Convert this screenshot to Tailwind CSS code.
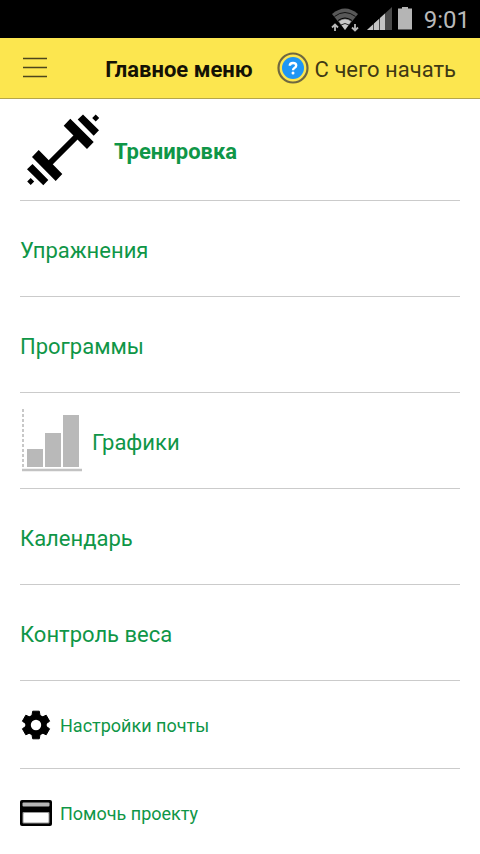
<!DOCTYPE html>
<html lang="ru">
<head>
    <meta charset="UTF-8">
    <meta name="viewport" content="width=device-width, initial-scale=1.0">
    <title>Главное меню</title>
    <script src="https://cdn.jsdelivr.net/npm/@tailwindcss/browser@4"></script>
</head>
<body class="bg-white font-[Roboto,sans-serif] overflow-x-hidden">

    <!-- Status bar -->
    <div class="flex h-[38px] items-center justify-end bg-black pr-2.5 text-[#b9b9b9]">
        <svg class="mr-2 h-7 w-7" viewBox="0 0 28 28" aria-hidden="true">
            <path d="M1 9Q14-2 27 9L14 25Z" fill="#585858"/>
            <path d="M3.500 11.500Q14 3.500 24.500 11.500" fill="none" stroke="#000" stroke-width="0.800"/>
            <path d="M8 16.500Q14 12 20 16.500L14 25Z" fill="#c8c8c8"/>
            <path d="M7 15.500Q14 10.500 21 15.500" fill="none" stroke="#000" stroke-width="1"/>
            <path d="M10 20Q14 17 18 20" fill="none" stroke="#000" stroke-width="0.800"/>
            <path d="M4 26V19M1 22.500L4 19.500L7 22.500M24 19V26M21 22.500L24 25.500L27 22.500" fill="none" stroke="#000" stroke-width="3.400"/>
            <path d="M4 26V19.500M1 22.500L4 19.500L7 22.500M24 19V25.500M21 22.500L24 25.500L27 22.500" fill="none" stroke="#b9b9b9" stroke-width="1.800"/>
        </svg>
        <svg class="mr-1.5 h-6 w-[25px]" viewBox="0 0 25 24" aria-hidden="true">
            <path d="M0 23L25 0V23Z" fill="#4a4a4a"/>
            <path d="M0 23L6 17.500V23ZM7 23V16.600L12 12V23ZM13 23V11L18 6.400V23Z" fill="#c4c4c4"/>
        </svg>
        <svg class="mr-3 h-6 w-3.5" viewBox="0 0 14 24" aria-hidden="true">
            <path d="M0 1.500H4V0H10V1.500H14V22.500H0Z" fill="#b5b5b5"/>
        </svg>
        <span class="pt-0.5 text-2xl">9:01</span>
    </div>

    <header class="flex h-[61px] items-center border-b border-[#b5a64a] bg-[#fce64f] pr-6 pl-[22px]">
        <button type="button" aria-label="Меню" class="h-6 w-[26px]">
            <svg class="h-6 w-[26px]" viewBox="0 0 26 24" aria-hidden="true">
                <path d="M1 2.500H25M1 11.500H25M1 20.500H25" stroke="#4d461c" stroke-width="1.400"/>
            </svg>
        </button>
        <h1 class="ml-auto pt-0.5 text-[22px] font-bold text-[#141205]">Главное меню</h1>
        <a href="#start" class="ml-6 flex items-center gap-1.5 text-[22px] text-[#3f3914]">
            <svg class="h-8 w-8" viewBox="0 0 32 32" aria-hidden="true">
                <circle cx="16" cy="16" r="14.500" fill="none" stroke="#6f6840" stroke-width="2.200"/>
                <circle cx="16" cy="16" r="11" fill="#1e96f5"/>
                <path d="M12.800 13.800Q12.800 11 16 11T19.200 13.500Q19.200 15 17.400 16Q16 16.800 16 18.300" fill="none" stroke="#fff" stroke-width="2.400"/>
                <circle cx="16" cy="21" r="1.500" fill="#fff"/>
            </svg>
            <span class="pt-0.5">С чего начать</span>
        </a>
    </header>

    <nav class="px-5 text-[22px] text-[#0f9647]">
        <a href="#training" class="flex h-[102px] items-center gap-3.5 border-b border-[#cbcbcb] font-bold">
            <svg class="h-20 w-20" viewBox="0 0 80 80" aria-hidden="true">
                <path d="M56 27L30 53" stroke="#000" stroke-width="6"/>
                <path d="M50.300 8.700L73.700 32L67 39L43.700 15.700ZM63 4.500L79 20.300L73.700 25.700L57.700 9.500ZM75.700 4.500L79.200 8L75.700 11.500L72.200 8Z"/>
                <path d="M18.700 40L42.300 64L35.700 71L12 47ZM12.500 54L28.300 70L23.300 75.300L7 59.300ZM10.700 68L14.200 71.500L10.700 75L7.200 71.500Z"/>
            </svg>
            <span class="pt-1">Тренировка</span>
        </a>
        <a href="#exercises" class="flex h-24 items-center border-b border-[#cbcbcb]">
            <span class="pt-1">Упражнения</span>
        </a>
        <a href="#programs" class="flex h-24 items-center border-b border-[#cbcbcb]">
            <span class="pt-1">Программы</span>
        </a>
        <a href="#charts" class="flex h-24 items-center gap-2 border-b border-[#cbcbcb]">
            <svg class="h-16 w-16" viewBox="0 0 64 64" aria-hidden="true">
                <path d="M7 40H23V58H7ZM25 24H41V58H25ZM43 6H59V58H43Z" fill="#b9b9b9"/>
                <path d="M2 61H62" stroke="#c2c2c2" stroke-width="2.400"/>
                <path d="M3 0V59" stroke="#c8c8c8" stroke-width="2" stroke-dasharray="3 2"/>
            </svg>
            <span class="pt-1">Графики</span>
        </a>
        <a href="#calendar" class="flex h-24 items-center border-b border-[#cbcbcb]">
            <span class="pt-1">Календарь</span>
        </a>
        <a href="#weight" class="flex h-24 items-center border-b border-[#cbcbcb]">
            <span class="pt-1">Контроль веса</span>
        </a>
        <a href="#mail" class="flex h-[88px] items-center gap-2 border-b border-[#cbcbcb] text-lg">
            <svg class="h-8 w-8" viewBox="0 0 32 32" aria-hidden="true">
                <circle cx="16" cy="16" r="8" fill="none" stroke="#000" stroke-width="5.600"/>
                <path d="M12.700 2.200H19.300L20.300 8H11.700ZM12.700 29.800H19.300L20.300 24H11.700ZM2.400 12.200L5.800 6.200L11 8.600L7 15.500ZM29.600 12.200L26.200 6.200L21 8.600L25 15.500ZM2.400 19.800L5.800 25.800L11 23.400L7 16.500ZM29.600 19.800L26.200 25.800L21 23.400L25 16.500Z" stroke="#000" stroke-linejoin="round"/>
            </svg>
            <span class="pt-0.5">Настройки почты</span>
        </a>
        <a href="#donate" class="flex h-[88px] items-center gap-2 text-lg">
            <svg class="h-8 w-8" viewBox="0 0 32 32" aria-hidden="true">
                <rect y="3" width="32" height="26" rx="2"/>
                <rect x="2.500" y="5.500" width="27" height="4" rx="1" fill="#b5b5b5"/>
                <rect x="2.500" y="15" width="27" height="11.500" rx="1" fill="#999"/>
                <rect x="3.500" y="16" width="25" height="9.500" rx="1" fill="#fff"/>
            </svg>
            <span class="pt-0.5">Помочь проекту</span>
        </a>
    </nav>

</body>
</html>
